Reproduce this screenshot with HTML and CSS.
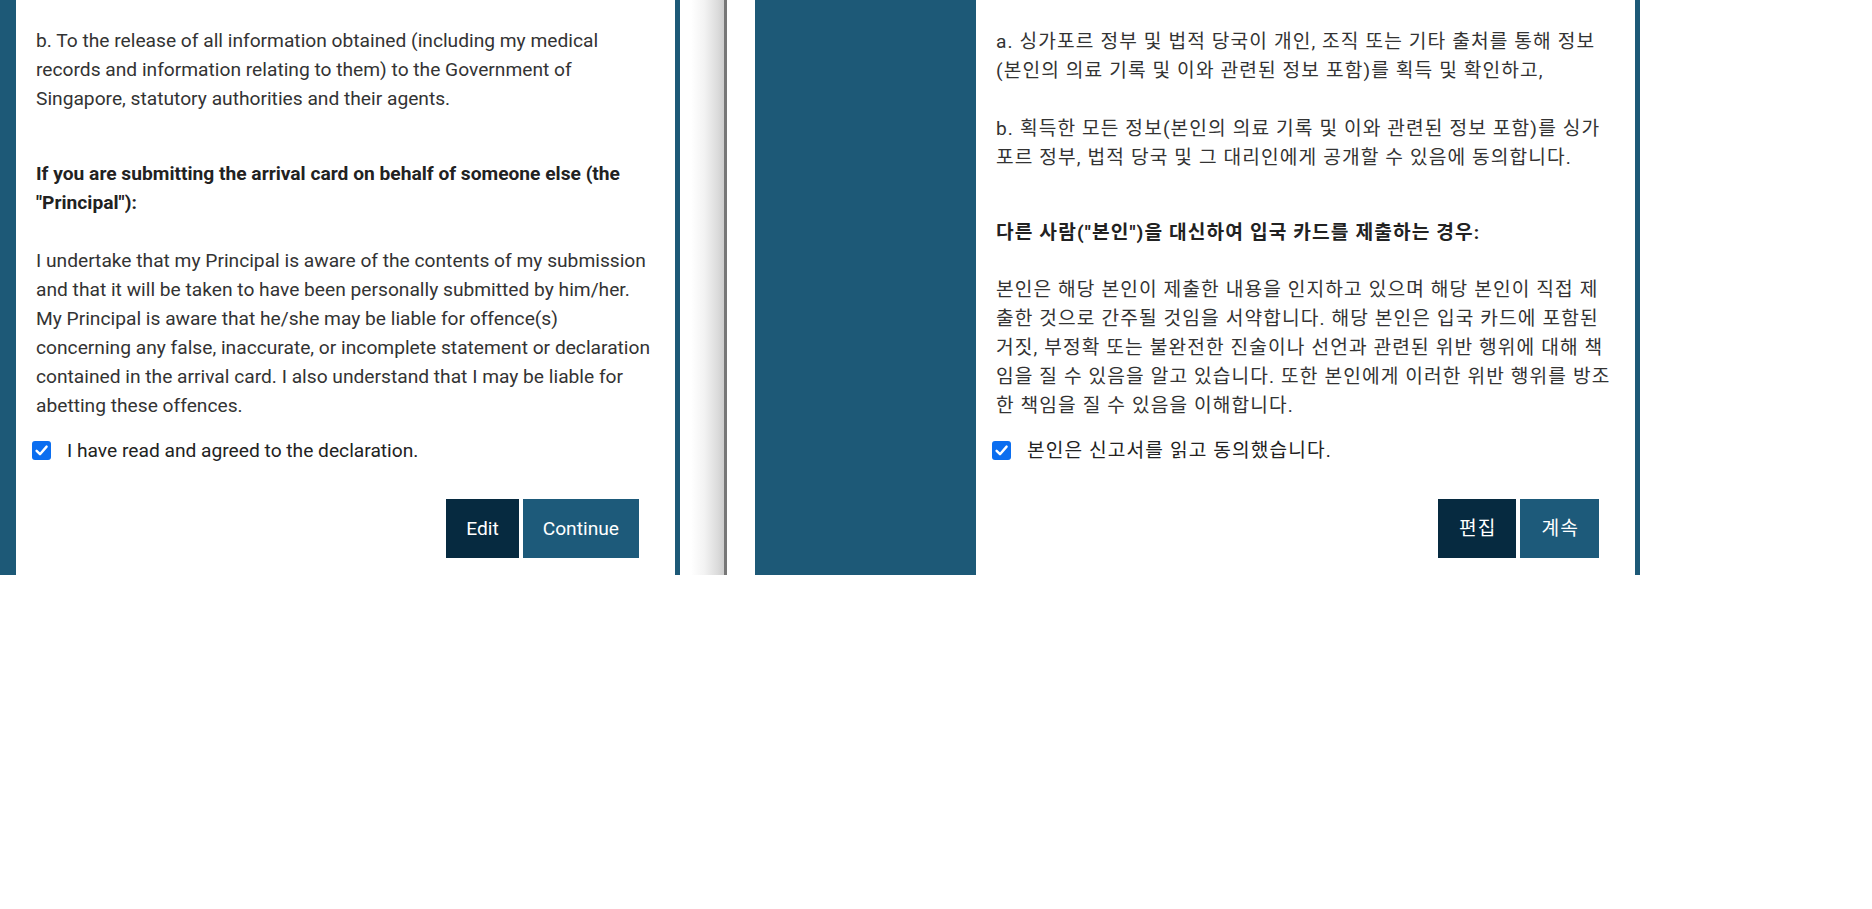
FILE: index.html
```html
<!DOCTYPE html>
<html lang="en">
<head>
<meta charset="utf-8">
<title>Declaration</title>
<link rel="stylesheet" href="styles.css">
</head>
<body>
<div class="strip">
  <section class="shot shot-left">
    <div class="card">
      <p class="para">b. To the release of all information obtained (including my medical records and information relating to them) to the Government of Singapore, statutory authorities and their agents.</p>
      <p class="heading">If you are submitting the arrival card on behalf of someone else (the "Principal"):</p>
      <p class="para">I undertake that my Principal is aware of the contents of my submission and that it will be taken to have been personally submitted by him/her. My Principal is aware that he/she may be liable for offence(s) concerning any false, inaccurate, or incomplete statement or declaration contained in the arrival card. I also understand that I may be liable for abetting these offences.</p>
      <label class="check-row">
        <span class="checkbox"><svg viewBox="0 0 19 19" width="19" height="19"><rect x="0" y="0" width="19" height="19" rx="3" fill="#0b6ef0"/><path d="M4.6 9.8 L8 13.2 L14.6 5.6" fill="none" stroke="#fff" stroke-width="2.4" stroke-linecap="round" stroke-linejoin="round"/></svg></span>
        <span class="check-label">I have read and agreed to the declaration.</span>
      </label>
      <div class="actions">
        <button class="btn btn-dark">Edit</button>
        <button class="btn btn-blue">Continue</button>
      </div>
    </div>
    <div class="edge"></div>
  </section>
  <div class="divider">
    <div class="shade"></div>
    <div class="rule"></div>
    <div class="blank"></div>
  </div>
  <section class="shot shot-right" lang="ko">
    <div class="sidebar"></div>
    <div class="card card-ko">
      <p class="para">a. 싱가포르 정부 및 법적 당국이 개인, 조직 또는 기타 출처를 통해 정보<br>(본인의 의료 기록 및 이와 관련된 정보 포함)를 획득 및 확인하고,</p>
      <p class="para">b. 획득한 모든 정보(본인의 의료 기록 및 이와 관련된 정보 포함)를 싱가<br>포르 정부, 법적 당국 및 그 대리인에게 공개할 수 있음에 동의합니다.</p>
      <p class="heading heading-ko">다른 사람("본인")을 대신하여 입국 카드를 제출하는 경우:</p>
      <p class="para">본인은 해당 본인이 제출한 내용을 인지하고 있으며 해당 본인이 직접 제<br>출한 것으로 간주될 것임을 서약합니다. 해당 본인은 입국 카드에 포함된<br>거짓, 부정확 또는 불완전한 진술이나 선언과 관련된 위반 행위에 대해 책<br>임을 질 수 있음을 알고 있습니다. 또한 본인에게 이러한 위반 행위를 방조<br>한 책임을 질 수 있음을 이해합니다.</p>
      <label class="check-row">
        <span class="checkbox"><svg viewBox="0 0 19 19" width="19" height="19"><rect x="0" y="0" width="19" height="19" rx="3" fill="#0b6ef0"/><path d="M4.6 9.8 L8 13.2 L14.6 5.6" fill="none" stroke="#fff" stroke-width="2.4" stroke-linecap="round" stroke-linejoin="round"/></svg></span>
        <span class="check-label">본인은 신고서를 읽고 동의했습니다.</span>
      </label>
      <div class="actions">
        <button class="btn btn-dark">편집</button>
        <button class="btn btn-blue">계속</button>
      </div>
    </div>
    <div class="edge"></div>
  </section>
</div>
</body>
</html>
```

FILE: styles.css
```css
* { box-sizing: border-box; }

html, body {
  margin: 0;
  padding: 0;
  background: #ffffff;
}

body {
  font-family: Roboto, "Noto Sans CJK KR", sans-serif;
  font-size: 19.2px;
  line-height: 29px;
  color: #333333;
}

.strip {
  display: flex;
  height: 575px;
  overflow: hidden;
}

.shot {
  display: flex;
  height: 100%;
  background: #1d5977;
}

.shot-left {
  width: 680px;
  padding-left: 16px;
}

.card {
  width: 659px;
  height: 100%;
  background: #ffffff;
  padding: 26px 21px 0 20px;
  display: flex;
  flex-direction: column;
}

.card-ko {
  padding-top: 27px;
  letter-spacing: 1.1px;
}

.edge {
  width: 5px;
  background: #1d5977;
}

.para {
  margin: 0 0 29px 0;
}

.heading {
  margin: 17px 0 29px 0;
  font-weight: 700;
  color: #222222;
}

.heading-ko {
  margin-bottom: 28px;
}

.para:last-of-type {
  margin-bottom: 16px;
}

.check-row {
  display: flex;
  align-items: center;
  gap: 16px;
  margin-left: -4px;
  height: 29px;
}

.checkbox {
  display: flex;
  width: 19px;
  height: 19px;
}

.check-label {
  color: #222222;
}

.actions {
  display: flex;
  justify-content: flex-end;
  gap: 4px;
  margin-top: 34px;
  margin-right: 15px;
}

.btn {
  font-family: Roboto, "Noto Sans CJK KR", sans-serif;
  font-size: 19.2px;
  line-height: 25px;
  height: 59px;
  padding: 0 20px;
  border: none;
  color: #ffffff;
  cursor: pointer;
}

.card-ko .btn {
  letter-spacing: 1.1px;
  padding: 0 20px 0 21px;
}

.btn-dark {
  background: #062a40;
}

.btn-blue {
  background: #1d5a7a;
}

.divider {
  display: flex;
  width: 75px;
  height: 100%;
}

.shade {
  width: 44px;
  background: linear-gradient(to right, #ffffff 0%, #ffffff 25%, #f3f3f3 55%, #dcdcdc 85%, #cdcdcd 100%);
}

.rule {
  width: 3px;
  background: #777777;
}

.blank {
  flex: 1;
  background: #ffffff;
}

.shot-right {
  width: 885px;
}

.sidebar {
  width: 221px;
  background: #1d5977;
}
```
